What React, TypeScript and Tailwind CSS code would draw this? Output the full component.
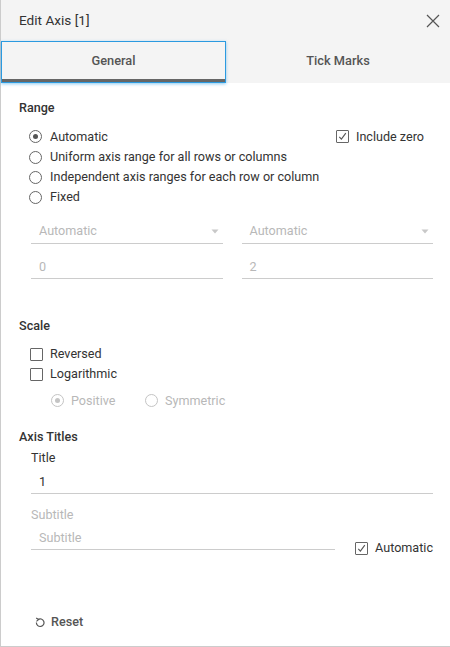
import React from "react";

function Radio({ checked, disabled }: { checked?: boolean; disabled?: boolean }) {
  return (
    <span
      className={`flex h-[13px] w-[13px] shrink-0 items-center justify-center rounded-full border ${
        disabled ? "border-[#c4c4c4]" : "border-[#666666]"
      }`}
    >
      {checked && (
        <span className={`h-[5px] w-[5px] rounded-full ${disabled ? "bg-[#c4c4c4]" : "bg-[#555555]"}`} />
      )}
    </span>
  );
}

function Checkbox({ checked }: { checked?: boolean }) {
  return (
    <span className="flex h-[13px] w-[13px] shrink-0 items-center justify-center rounded-[1px] border border-[#666666] bg-white">
      {checked && (
        <svg width="11" height="11" viewBox="0 0 11 11">
          <path d="M2.3 5.8 L4.4 8.2 L8.8 2.2" fill="none" stroke="#555555" strokeWidth="1.1" />
        </svg>
      )}
    </span>
  );
}

function Caret() {
  return (
    <svg width="8" height="5" viewBox="0 0 8 5">
      <path d="M0.5 0.5 L7.5 0.5 L4 4.5 Z" fill="#c8c8c8" />
    </svg>
  );
}

export default function App() {
  return (
    <div
      className="flex h-[647px] w-[450px] flex-col border-b border-l border-[#cccccc] bg-white text-[12.6px] text-[#333333]"
      style={{ fontFamily: "Roboto, 'Noto Sans', sans-serif" }}
    >
      {/* Header */}
      <div className="flex h-[41px] shrink-0 items-center justify-between bg-[#f4f4f4] pl-[18px] pr-[10px]">
        <span className="text-[13.6px] text-[#333333]">Edit Axis [1]</span>
        <svg width="14" height="14" viewBox="0 0 14 14">
          <path d="M1 1 L13 13 M13 1 L1 13" stroke="#555555" strokeWidth="1.2" fill="none" />
        </svg>
      </div>

      {/* Tabs */}
      <div className="flex h-[42px] shrink-0 bg-[#f4f4f4]">
        <div className="flex h-[42px] w-[225px] flex-col border border-[#2b9ae0] shadow-[0_1px_3px_rgba(43,154,224,0.55)]">
          <div className="flex flex-1 items-center justify-center bg-[#f4f4f4] text-[12.8px] font-medium text-[#555555]">
            General
          </div>
          <div className="h-[3px] bg-[#666666]" />
        </div>
        <div className="flex flex-1 items-center justify-center pb-[2px] text-[12.8px] font-medium text-[#555555]">
          Tick Marks
        </div>
      </div>

      {/* Content */}
      <div className="flex flex-1 flex-col">
        <div className="mt-[15px] flex h-[20px] items-center pl-[18px] font-medium">Range</div>

        <div className="mt-[9px] flex flex-col pl-[28px] pr-[26px]">
          <div className="flex h-[20px] items-center justify-between">
            <div className="flex items-center gap-[8px]">
              <Radio checked />
              <span>Automatic</span>
            </div>
            <div className="flex items-center gap-[7px]">
              <Checkbox checked />
              <span>Include zero</span>
            </div>
          </div>
          <div className="flex h-[20px] items-center gap-[8px]">
            <Radio />
            <span>Uniform axis range for all rows or columns</span>
          </div>
          <div className="flex h-[20px] items-center gap-[8px]">
            <Radio />
            <span>Independent axis ranges for each row or column</span>
          </div>
          <div className="flex h-[20px] items-center gap-[8px]">
            <Radio />
            <span>Fixed</span>
          </div>
        </div>

        <div className="mt-[13px] grid grid-cols-2 gap-x-[19px] pl-[30px] pr-[17px]">
          <div className="flex h-[24px] items-center justify-between border-b border-[#cccccc] pl-[8px] pr-[4px] text-[#b8b8b8]">
            <span>Automatic</span>
            <Caret />
          </div>
          <div className="flex h-[24px] items-center justify-between border-b border-[#cccccc] pl-[8px] pr-[4px] text-[#b8b8b8]">
            <span>Automatic</span>
            <Caret />
          </div>
          <div className="mt-[11px] flex h-[24px] items-center border-b border-[#cccccc] pl-[8px] pt-[2px] text-[#b8b8b8]">
            0
          </div>
          <div className="mt-[11px] flex h-[24px] items-center border-b border-[#cccccc] pl-[8px] pt-[2px] text-[#b8b8b8]">
            2
          </div>
        </div>

        <div className="mt-[37px] flex h-[20px] items-center pl-[18px] font-medium">Scale</div>
        <div className="mt-[8px] flex flex-col pl-[29px]">
          <div className="flex h-[20px] items-center gap-[7px]">
            <Checkbox />
            <span>Reversed</span>
          </div>
          <div className="flex h-[20px] items-center gap-[7px]">
            <Checkbox />
            <span>Logarithmic</span>
          </div>
          <div className="mt-[7px] flex h-[20px] items-center pl-[21px] text-[#b8b8b8]">
            <div className="flex w-[94px] items-center gap-[7px]">
              <Radio checked disabled />
              <span>Positive</span>
            </div>
            <div className="flex items-center gap-[7px]">
              <Radio disabled />
              <span>Symmetric</span>
            </div>
          </div>
        </div>

        <div className="mt-[16px] flex h-[20px] items-center pl-[18px] font-medium">Axis Titles</div>
        <div className="mt-[1px] flex h-[20px] items-center pl-[30px]">Title</div>
        <div className="ml-[30px] mr-[17px] mt-[2px] flex h-[24px] items-center border-b border-[#cccccc] pl-[8px] pt-[1px]">
          1
        </div>
        <div className="mt-[11px] flex h-[20px] items-center pl-[30px] text-[#b8b8b8]">Subtitle</div>
        <div className="mt-[2px] flex items-end pl-[30px] pr-[17px]">
          <div className="flex h-[23px] w-[304px] items-center border-b border-[#cccccc] pl-[8px] text-[#b8b8b8]">
            Subtitle
          </div>
          <div className="ml-auto flex h-[20px] translate-y-[8px] items-center gap-[7px]">
            <Checkbox checked />
            <span>Automatic</span>
          </div>
        </div>

        <div className="mt-[62px] flex h-[20px] items-center gap-[6px] pl-[34px] font-medium text-[#555555]">
          <svg width="10" height="11" viewBox="0 0 10 11">
            <path d="M3 2.6 A3.8 3.8 0 1 1 1.4 5.6" fill="none" stroke="#555555" strokeWidth="1.2" />
            <path d="M1.2 0.9 L3.6 2.6 L1.4 4.4" fill="none" stroke="#555555" strokeWidth="1.2" />
          </svg>
          <span>Reset</span>
        </div>
      </div>
    </div>
  );
}
